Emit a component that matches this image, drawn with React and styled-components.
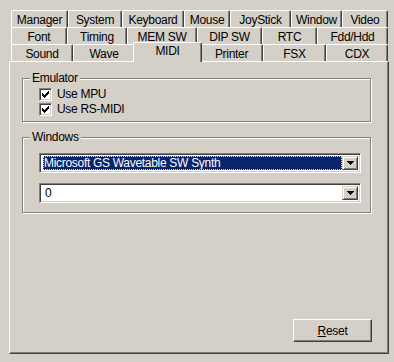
import React from "react";
import styled, { createGlobalStyle } from "styled-components";

const BG = "#d4d0c8";

const Global = createGlobalStyle`
  html, body { margin: 0; padding: 0; background: ${BG}; }
  body {
    font-family: "Liberation Sans", Arial, sans-serif;
    font-size: 12px;
    letter-spacing: -0.3px;
    color: #000;
  }
  * { box-sizing: border-box; }
`;

const Sheet = styled.div`
  padding: 10px 0 0 9px;
  width: 394px;
  height: 362px;
`;

const TabRows = styled.div`
  display: flex;
  flex-direction: column;
  margin-left: 2px;
  width: 377px;
`;

const TabRow = styled.div`
  display: flex;
  height: 17px;
`;

const Tab = styled.div`
  flex: none;
  width: ${(p) => p.$w}px;
  height: 17px;
  border-top: 1px solid #fff;
  border-left: 1px solid #fff;
  border-right: 1px solid #404040;
  border-radius: 2px 2px 0 0;
  box-shadow: inset -1px 0 0 #808080;
  background: ${BG};
  display: flex;
  align-items: center;
  justify-content: center;
  padding-top: 1px;
  white-space: nowrap;
`;

const ActiveTab = styled(Tab)`
  position: relative;
  z-index: 1;
  width: ${(p) => p.$w + 4}px;
  height: 20px;
  margin: -2px -2px -1px;
  padding-top: 0;
  padding-bottom: 3px;
`;

const Panel = styled.div`
  width: 380px;
  height: 293px;
  border-top: 1px solid #fff;
  border-left: 1px solid #fff;
  border-right: 1px solid #404040;
  border-bottom: 1px solid #404040;
  box-shadow: inset -1px -1px 0 #808080;
  padding: 16px 0 11px 12px;
  display: flex;
  flex-direction: column;
`;

const Group = styled.div`
  position: relative;
  width: 349px;
  height: ${(p) => p.$h}px;
  border: 1px solid #808080;
  box-shadow: inset 1px 1px 0 #fff, 1px 1px 0 #fff;
  margin-top: ${(p) => p.$mt || 0}px;
  padding: ${(p) => p.$pt}px 0 0 16px;
  display: flex;
  flex-direction: column;
  gap: ${(p) => p.$gap}px;
`;

const Legend = styled.span`
  position: absolute;
  top: -8px;
  left: 7px;
  padding: 0 2px;
  background: ${BG};
  line-height: 14px;
`;

const CheckRow = styled.label`
  display: flex;
  align-items: center;
  gap: 5px;
  height: 13px;
  line-height: 13px;
`;

const CheckBox = styled.span`
  width: 13px;
  height: 13px;
  flex: none;
  background: #fff;
  border-top: 1px solid #808080;
  border-left: 1px solid #808080;
  border-right: 1px solid #fff;
  border-bottom: 1px solid #fff;
  box-shadow: inset 1px 1px 0 #404040, inset -1px -1px 0 ${BG};
  display: flex;
  align-items: center;
  justify-content: center;
  svg { display: block; }
`;

const Combo = styled.div`
  width: 322px;
  height: 20px;
  display: flex;
  background: #fff;
  border-top: 1px solid #808080;
  border-left: 1px solid #808080;
  border-right: 1px solid #fff;
  border-bottom: 1px solid #fff;
  box-shadow: inset 1px 1px 0 #404040, inset -1px -1px 0 ${BG};
  padding: 2px;
`;

const ComboText = styled.div`
  flex: 1;
  margin: 0 0 0 1px;
  padding-left: ${(p) => (p.$sel ? 0 : 1)}px;
  display: flex;
  align-items: center;
  white-space: nowrap;
  overflow: hidden;
  background: ${(p) => (p.$sel ? "#0a246a" : "#fff")};
  color: ${(p) => (p.$sel ? "#fff" : "#000")};
  border: 1px dotted ${(p) => (p.$sel ? "#f5db95" : "transparent")};
`;

const DropButton = styled.div`
  width: 16px;
  flex: none;
  background: ${BG};
  border-top: 1px solid ${BG};
  border-left: 1px solid ${BG};
  border-right: 1px solid #404040;
  border-bottom: 1px solid #404040;
  box-shadow: inset 1px 1px 0 #fff, inset -1px -1px 0 #808080;
  display: flex;
  align-items: center;
  justify-content: center;
  svg { display: block; }
`;

const Footer = styled.div`
  margin-top: auto;
  width: 350px;
  display: flex;
  justify-content: flex-end;
`;

const Button = styled.button`
  width: 79px;
  height: 23px;
  font: inherit;
  letter-spacing: inherit;
  color: #000;
  background: ${BG};
  border-top: 1px solid #fff;
  border-left: 1px solid #fff;
  border-right: 1px solid #404040;
  border-bottom: 1px solid #404040;
  box-shadow: inset -1px -1px 0 #808080;
  padding: 0;
  u { text-decoration: underline; }
`;

const rows = [
  [["Manager", 57], ["System", 54], ["Keyboard", 62], ["Mouse", 46], ["JoyStick", 61], ["Window", 51], ["Video", 46]],
  [["Font", 56], ["Timing", 60], ["MEM SW", 70], ["DIP SW", 65], ["RTC", 55], ["Fdd/Hdd", 71]],
  [["Sound", 62], ["Wave", 62], ["MIDI", 65, true], ["Printer", 63], ["FSX", 63], ["CDX", 62]],
];

const Check = () => (
  <svg width="7" height="7" viewBox="0 0 7 7" shapeRendering="crispEdges">
    <g fill="#000">
      <rect x="6" y="0" width="1" height="1" />
      <rect x="5" y="1" width="2" height="1" />
      <rect x="0" y="2" width="1" height="1" />
      <rect x="4" y="2" width="3" height="1" />
      <rect x="0" y="3" width="2" height="1" />
      <rect x="3" y="3" width="3" height="1" />
      <rect x="0" y="4" width="5" height="1" />
      <rect x="1" y="5" width="3" height="1" />
      <rect x="2" y="6" width="1" height="1" />
    </g>
  </svg>
);

const Arrow = () => (
  <svg width="7" height="4" viewBox="0 0 7 4" shapeRendering="crispEdges">
    <g fill="#000">
      <rect x="0" y="0" width="7" height="1" />
      <rect x="1" y="1" width="5" height="1" />
      <rect x="2" y="2" width="3" height="1" />
      <rect x="3" y="3" width="1" height="1" />
    </g>
  </svg>
);

export default function App() {
  return (
    <>
      <Global />
      <Sheet>
        <TabRows>
          {rows.map((row, i) => (
            <TabRow key={i}>
              {row.map(([label, w, active]) =>
                active ? (
                  <ActiveTab key={label} $w={w}>{label}</ActiveTab>
                ) : (
                  <Tab key={label} $w={w}>{label}</Tab>
                )
              )}
            </TabRow>
          ))}
        </TabRows>
        <Panel>
          <Group $h={44} $pt={9} $gap={2}>
            <Legend>Emulator</Legend>
            <CheckRow>
              <CheckBox><Check /></CheckBox>
              Use MPU
            </CheckRow>
            <CheckRow>
              <CheckBox><Check /></CheckBox>
              Use RS-MIDI
            </CheckRow>
          </Group>
          <Group $h={76} $pt={15} $gap={10} $mt={15}>
            <Legend>Windows</Legend>
            <Combo>
              <ComboText $sel>Microsoft GS Wavetable SW Synth</ComboText>
              <DropButton><Arrow /></DropButton>
            </Combo>
            <Combo>
              <ComboText>0</ComboText>
              <DropButton><Arrow /></DropButton>
            </Combo>
          </Group>
          <Footer>
            <Button><u>R</u>eset</Button>
          </Footer>
        </Panel>
      </Sheet>
    </>
  );
}
